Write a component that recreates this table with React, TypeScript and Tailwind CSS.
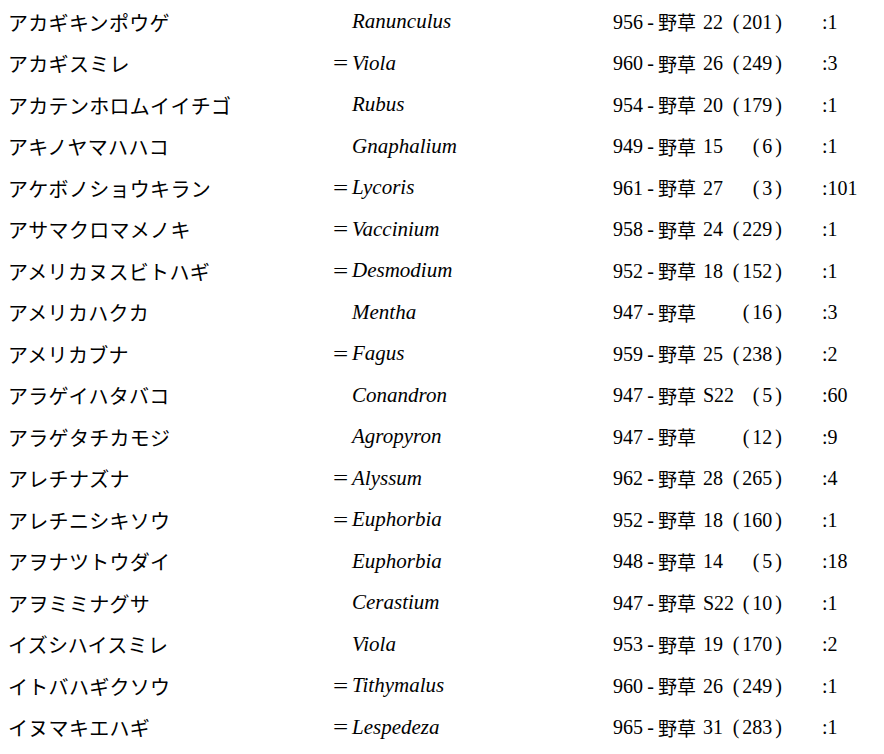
import React from "react";

type Row = {
  ja: string;
  eq: boolean;
  la: string;
  no: string;
  vol: string;
  p: string;
  c: string;
};

const rows: Row[] = [
  { ja: "アカギキンポウゲ", eq: false, la: "Ranunculus", no: "956", vol: "22", p: "201", c: "1" },
  { ja: "アカギスミレ", eq: true, la: "Viola", no: "960", vol: "26", p: "249", c: "3" },
  { ja: "アカテンホロムイイチゴ", eq: false, la: "Rubus", no: "954", vol: "20", p: "179", c: "1" },
  { ja: "アキノヤマハハコ", eq: false, la: "Gnaphalium", no: "949", vol: "15", p: "6", c: "1" },
  { ja: "アケボノショウキラン", eq: true, la: "Lycoris", no: "961", vol: "27", p: "3", c: "101" },
  { ja: "アサマクロマメノキ", eq: true, la: "Vaccinium", no: "958", vol: "24", p: "229", c: "1" },
  { ja: "アメリカヌスビトハギ", eq: true, la: "Desmodium", no: "952", vol: "18", p: "152", c: "1" },
  { ja: "アメリカハクカ", eq: false, la: "Mentha", no: "947", vol: "", p: "16", c: "3" },
  { ja: "アメリカブナ", eq: true, la: "Fagus", no: "959", vol: "25", p: "238", c: "2" },
  { ja: "アラゲイハタバコ", eq: false, la: "Conandron", no: "947", vol: "S22", p: "5", c: "60" },
  { ja: "アラゲタチカモジ", eq: false, la: "Agropyron", no: "947", vol: "", p: "12", c: "9" },
  { ja: "アレチナズナ", eq: true, la: "Alyssum", no: "962", vol: "28", p: "265", c: "4" },
  { ja: "アレチニシキソウ", eq: true, la: "Euphorbia", no: "952", vol: "18", p: "160", c: "1" },
  { ja: "アヲナツトウダイ", eq: false, la: "Euphorbia", no: "948", vol: "14", p: "5", c: "18" },
  { ja: "アヲミミナグサ", eq: false, la: "Cerastium", no: "947", vol: "S22", p: "10", c: "1" },
  { ja: "イズシハイスミレ", eq: false, la: "Viola", no: "953", vol: "19", p: "170", c: "2" },
  { ja: "イトバハギクソウ", eq: true, la: "Tithymalus", no: "960", vol: "26", p: "249", c: "1" },
  { ja: "イヌマキエハギ", eq: true, la: "Lespedeza", no: "965", vol: "31", p: "283", c: "1" },
];

const serif = "font-['Liberation_Serif','Noto_Sans_CJK_JP',serif]";
const cjk = "font-['Noto_Sans_CJK_JP',sans-serif]";

export default function App() {
  return (
    <div className="w-[884px] h-[754px] bg-white text-black overflow-hidden pt-[1px]">
      {rows.map((r, i) => (
        <div key={i} className="flex items-center h-[41.5px] text-[20px]">
          <div className={`w-[333px] pl-[8px] ${cjk} text-[20px] tracking-[0.3px] leading-none pt-[2px]`}>{r.ja}</div>
          <div className={`w-[19px] ${serif} text-[20px] leading-none`}>
            {r.eq ? <span className="inline-block origin-left scale-x-[1.35]">=</span> : null}
          </div>
          <div className={`w-[261px] ${serif} italic text-[21px] leading-none`}>{r.la}</div>
          <div className={`w-[30px] ${serif} leading-none`}>{r.no}</div>
          <div className={`w-[15px] ${serif} text-center leading-none`}>-</div>
          <div className={`w-[45px] ${cjk} text-[19px] leading-none`}>野草</div>
          <div className={`w-[79px] flex justify-between ${serif} leading-none`}>
            <span>{r.vol}</span>
            <span className="flex">
              <span className="mr-[3px]">(</span>
              <span>{r.p}</span>
              <span className="ml-[3px]">)</span>
            </span>
          </div>
          <div className="w-[40px]" />
          <div className={`${serif} leading-none`}>:{r.c}</div>
        </div>
      ))}
    </div>
  );
}
